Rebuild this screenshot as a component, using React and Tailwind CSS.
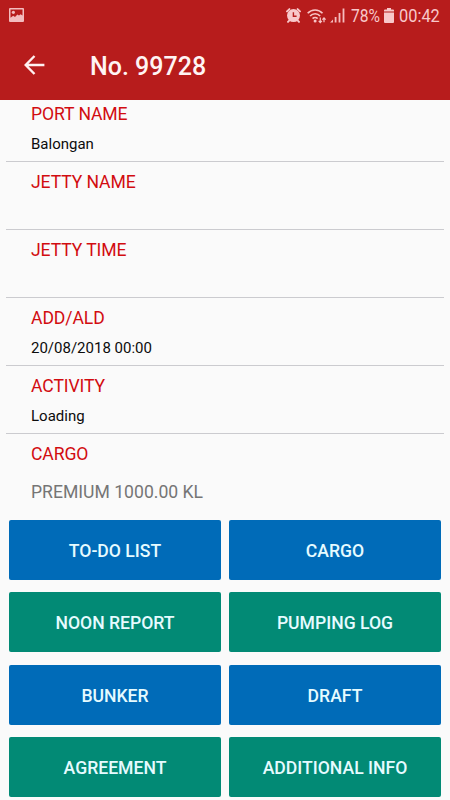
const fields = [
  { label: 'PORT NAME', value: 'Balongan' },
  { label: 'JETTY NAME', value: '' },
  { label: 'JETTY TIME', value: '' },
  { label: 'ADD/ALD', value: '20/08/2018 00:00' },
  { label: 'ACTIVITY', value: 'Loading' },
];

const actions = [
  { label: 'TO-DO LIST', color: 'bg-[#006bb8]' },
  { label: 'CARGO', color: 'bg-[#006bb8]' },
  { label: 'NOON REPORT', color: 'bg-[#028a75]' },
  { label: 'PUMPING LOG', color: 'bg-[#028a75]' },
  { label: 'BUNKER', color: 'bg-[#006bb8]' },
  { label: 'DRAFT', color: 'bg-[#006bb8]' },
  { label: 'AGREEMENT', color: 'bg-[#028a75]' },
  { label: 'ADDITIONAL INFO', color: 'bg-[#028a75]' },
];

function PictureIcon() {
  return (
    <svg width="15" height="14" viewBox="0 0 15 14" fill="#f3bcbe">
      <path fillRule="evenodd" d="M1 0h13a1 1 0 0 1 1 1v12a1 1 0 0 1-1 1H1a1 1 0 0 1-1-1V1a1 1 0 0 1 1-1zM1.5 1.5v8.3L4.2 7.8l1.8 1.2 2.4-2.6 1.6 1.2 1.6-1.4 1.9 1.4V1.5z" />
      <circle cx="4.4" cy="4.3" r="1.6" />
    </svg>
  );
}

function AlarmIcon() {
  return (
    <svg width="15" height="15" viewBox="0 0 15 15" fill="none">
      <circle cx="7.5" cy="7.6" r="6.5" fill="#f8c8ca" />
      <path d="M1 3.4 3.4 1.1M14 3.4 11.6 1.1M3.2 12.6 2 13.9M11.8 12.6l1.2 1.3" stroke="#f8c8ca" strokeWidth="1.9" strokeLinecap="round" />
      <path d="M7.4 4.2v4h3.2" stroke="#b71c1c" strokeWidth="1.4" />
    </svg>
  );
}

function WifiIcon() {
  return (
    <svg width="20" height="16" viewBox="0 0 20 16" fill="none" stroke="#f8c4c6" strokeWidth="1.7">
      <path d="M.7 5.3c4-4.4 10.8-4.4 14.8 0M3.1 8c2.7-3 7.3-3 10 0M5.6 10.6c1.4-1.5 3.6-1.5 5 0" />
      <circle cx="8.1" cy="13" r="1.5" fill="#f8c4c6" stroke="none" />
      <path d="M13.3 9.5v5M11.7 12.8l1.6 1.7 1.6-1.7M17 14.3v-4M15.4 11.6 17 9.9l1.6 1.7" strokeWidth="1.2" />
    </svg>
  );
}

function SignalIcon() {
  return (
    <svg width="16" height="15" viewBox="0 0 16 15" fill="#f5bcbe">
      <path d="M0 14.5 3 11.5v3zM4.7 9h1.8v5.5H4.7zM8.6 5h1.8v9.5H8.6zM12.6 .5h1.8v14h-1.8z" />
    </svg>
  );
}

function BatteryIcon() {
  return (
    <svg width="10" height="15" viewBox="0 0 10 15" fill="#f8c8ca">
      <path d="M3 0h4v1.4h2a1 1 0 0 1 1 1V3.4H0v-1a1 1 0 0 1 1-1h2z" />
      <path d="M0 4.4h10V14a1 1 0 0 1-1 1H1a1 1 0 0 1-1-1z" />
    </svg>
  );
}

function StatusBar() {
  return (
    <div className="flex h-[31px] items-center pl-[9px] text-lg text-[#f8c8ca]">
      <div className="mt-[-1px]"><PictureIcon /></div>
      <div className="ml-[262px]"><AlarmIcon /></div>
      <div className="ml-[6px]"><WifiIcon /></div>
      <div className="ml-[3px]"><SignalIcon /></div>
      <span className="ml-[5px] w-[30px] origin-left scale-x-[0.87] whitespace-nowrap">78%</span>
      <div className="ml-[3px]"><BatteryIcon /></div>
      <span className="ml-[5px] w-[42px] origin-left scale-x-[0.91] whitespace-nowrap">00:42</span>
    </div>
  );
}

function Field({ label, value }) {
  return (
    <div className="mx-[6px] h-[68px] border-b border-[#cbcbcf] pl-[25px] pt-[8px] first:h-[62px] first:pt-[2px]">
      <div className="text-[17.6px]/[24px] tracking-[-0.1px] text-[#d20c10]">{label}</div>
      <div className="mt-[8px] text-[15px]/[20px] text-[#0c0c0c]">{value}</div>
    </div>
  );
}

export default function App() {
  return (
    <div className="h-[800px] w-[450px] overflow-hidden bg-[#fafafa] font-['Roboto',sans-serif]">
      <header className="h-[100px] bg-[#b71c1c]">
        <StatusBar />
        <div className="flex h-[68px] items-center pl-[24px]">
          <svg width="21" height="20" viewBox="0 0 21 20" fill="none" stroke="#fff0f0" strokeWidth="2.4">
            <path d="M20.4 10H2M10.5 1 1.7 10l8.8 9" />
          </svg>
          <h1 className="ml-[45px] pt-[3px] text-[25px]/[32px] font-medium text-[#fff4f4]">No. 99728</h1>
        </div>
      </header>
      <section>
        {fields.map((f) => <Field key={f.label} label={f.label} value={f.value} />)}
      </section>
      <section className="h-[86px] pl-[31px] pt-[8px]">
        <div className="text-[17.6px]/[24px] tracking-[-0.1px] text-[#d20c10]">CARGO</div>
        <div className="mt-[14px] text-[17.6px]/[24px] text-[#757575]">PREMIUM 1000.00 KL</div>
      </section>
      <section className="grid grid-cols-2 gap-x-2 gap-y-[12.4px] px-[9px]">
        {actions.map((a) => (
          <button key={a.label} className={`h-[60px] rounded-[2px] pt-[2px] text-[17.6px] font-medium text-[#e6fbff] ${a.color}`}>
            {a.label}
          </button>
        ))}
      </section>
    </div>
  );
}
